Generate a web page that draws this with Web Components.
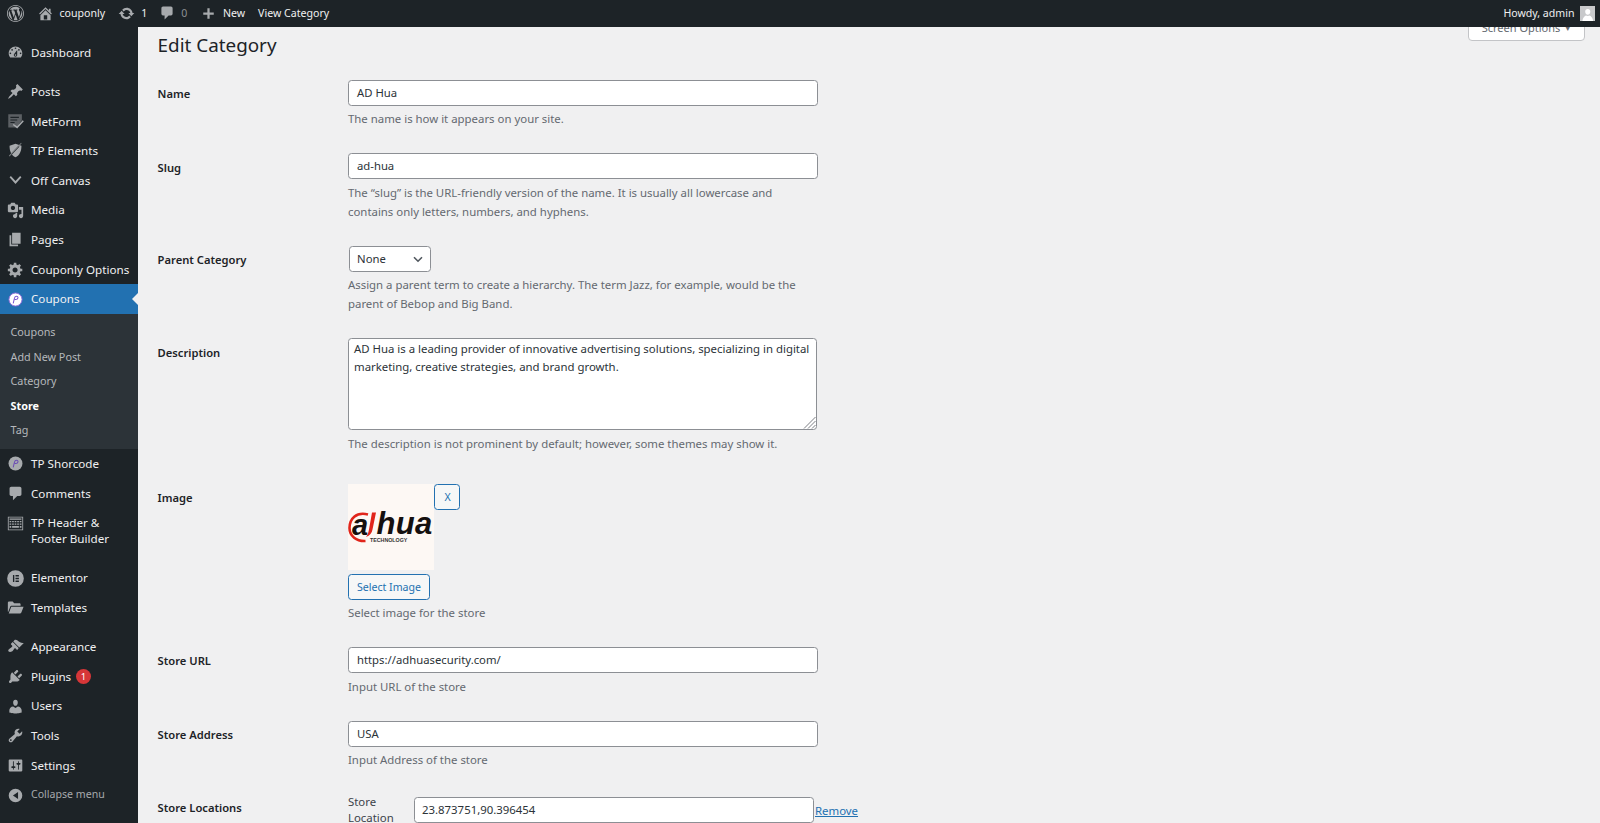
<!DOCTYPE html>
<html>
<head>
<meta charset="utf-8">
<title>Edit Category</title>
<style>
  html, body { margin: 0; height: 100%; overflow: hidden; }
  body { font-family: "Noto Sans", "Open Sans", sans-serif; background: #f0f0f1; }
</style>
</head>
<body>
<wp-admin-page>
  <wp-admin-bar slot="bar"></wp-admin-bar>
  <wp-side-menu slot="side">
    <wp-menu-item icon="dashboard" class="gap">Dashboard</wp-menu-item>
    <wp-menu-item icon="pin">Posts</wp-menu-item>
    <wp-menu-item icon="metform">MetForm</wp-menu-item>
    <wp-menu-item icon="shield">TP Elements</wp-menu-item>
    <wp-menu-item icon="chevron">Off Canvas</wp-menu-item>
    <wp-menu-item icon="media">Media</wp-menu-item>
    <wp-menu-item icon="page">Pages</wp-menu-item>
    <wp-menu-item icon="gear">Couponly Options</wp-menu-item>
    <wp-menu-item icon="coupon" active>Coupons</wp-menu-item>
    <wp-sub-menu>
      <a>Coupons</a>
      <a>Add New Post</a>
      <a>Category</a>
      <a class="on">Store</a>
      <a>Tag</a>
    </wp-sub-menu>
    <wp-menu-item icon="shortcode">TP Shorcode</wp-menu-item>
    <wp-menu-item icon="comment">Comments</wp-menu-item>
    <wp-menu-item icon="keyboard" class="gap" tall>TP Header &amp;<br>Footer Builder</wp-menu-item>
    <wp-menu-item icon="elementor">Elementor</wp-menu-item>
    <wp-menu-item icon="folder" class="gap">Templates</wp-menu-item>
    <wp-menu-item icon="brush">Appearance</wp-menu-item>
    <wp-menu-item icon="plug" badge="1">Plugins</wp-menu-item>
    <wp-menu-item icon="user">Users</wp-menu-item>
    <wp-menu-item icon="wrench">Tools</wp-menu-item>
    <wp-menu-item icon="sliders">Settings</wp-menu-item>
    <wp-menu-item icon="collapse" dim>Collapse menu</wp-menu-item>
  </wp-side-menu>

  <wp-page-head>Edit Category</wp-page-head>

  <wp-form-row label="Name">
    <wp-field>AD Hua</wp-field>
    <wp-help>The name is how it appears on your site.</wp-help>
  </wp-form-row>
  <wp-form-row label="Slug">
    <wp-field>ad-hua</wp-field>
    <wp-help>The “slug” is the URL-friendly version of the name. It is usually all lowercase and contains only letters, numbers, and hyphens.</wp-help>
  </wp-form-row>
  <wp-form-row label="Parent Category">
    <wp-select>None</wp-select>
    <wp-help>Assign a parent term to create a hierarchy. The term Jazz, for example, would be the parent of Bebop and Big Band.</wp-help>
  </wp-form-row>
  <wp-form-row label="Description" style="--row-gap:31px">
    <wp-text-area>AD Hua is a leading provider of innovative advertising solutions, specializing in digital marketing, creative strategies, and brand growth.</wp-text-area>
    <wp-help>The description is not prominent by default; however, some themes may show it.</wp-help>
  </wp-form-row>
  <wp-form-row label="Image">
    <wp-image-picker></wp-image-picker>
    <wp-help>Select image for the store</wp-help>
  </wp-form-row>
  <wp-form-row label="Store URL" style="--label-top:4px">
    <wp-field>https://adhuasecurity.com/</wp-field>
    <wp-help>Input URL of the store</wp-help>
  </wp-form-row>
  <wp-form-row label="Store Address" style="--label-top:4px;--row-gap:25px">
    <wp-field>USA</wp-field>
    <wp-help>Input Address of the store</wp-help>
  </wp-form-row>
  <wp-form-row label="Store Locations" style="--label-top:4px">
    <wp-location-row>23.873751,90.396454</wp-location-row>
  </wp-form-row>
</wp-admin-page>

<script>
const ICONS = {
  logo: '<path d="M20 10c0-5.52-4.48-10-10-10S0 4.48 0 10s4.48 10 10 10 10-4.48 10-10zM10 1.01c4.96 0 8.99 4.03 8.99 8.99s-4.03 8.99-8.99 8.99S1.01 14.96 1.01 10 5.04 1.01 10 1.01zM8.01 14.82L4.96 6.61c.49-.03 1.05-.08 1.05-.08.43-.05.38-1.01-.06-.99 0 0-1.29.1-2.13.1-.15 0-.33 0-.52-.01 1.44-2.17 3.9-3.6 6.7-3.6 2.09 0 3.99.79 5.41 2.09-.6-.08-1.45.35-1.45 1.42 0 .66.38 1.22.79 1.88.31.54.5 1.22.5 2.21 0 1.34-1.27 4.48-1.27 4.48l-2.71-7.5c.48-.03.75-.16.75-.16.43-.05.38-1.1-.05-1.08 0 0-1.3.11-2.14.11-.78 0-2.11-.11-2.11-.11-.43-.02-.48 1.06-.05 1.08l.84.08 1.12 3.04zm6.02 2.15L16.64 10s.67-1.69.39-3.81c.63 1.14.94 2.42.94 3.81 0 2.96-1.56 5.58-3.94 6.97zM2.68 6.77L6.5 17.25c-2.67-1.3-4.47-4.08-4.47-7.25 0-1.16.2-2.23.65-3.23zm7.45 4.53l2.29 6.25c-.75.27-1.57.42-2.42.42-.72 0-1.41-.11-2.06-.3z"/>',
  home: '<path d="M16 8.5l1.53 1.53-1.06 1.06L10 4.62l-6.47 6.47-1.06-1.06L10 2.5l4 4v-2h2v4zm-6-2.46l6 5.99V18H4v-5.97zM12 17v-5H8v5h4z"/>',
  update: '<path d="M10.2 3.28c3.53 0 6.43 2.61 6.92 6h2.08l-3.5 4-3.5-4h2.32c-.45-1.97-2.21-3.45-4.32-3.45-1.45 0-2.73.71-3.54 1.78L4.95 5.66C6.23 4.2 8.11 3.28 10.2 3.28zm-.4 13.44c-3.52 0-6.43-2.61-6.92-6H.8l3.5-4c1.17 1.33 2.33 2.67 3.5 4H5.48c.45 1.97 2.21 3.45 4.32 3.45 1.45 0 2.73-.71 3.54-1.78l1.71 1.95c-1.28 1.46-3.15 2.38-5.25 2.38z"/>',
  plus: '<path d="M17 8.5v3h-5.5V17h-3v-5.5H3v-3h5.5V3h3v5.5z"/>',
  dashboard: '<path d="M3.76 16h12.48c1.1-1.37 1.76-3.11 1.76-5 0-4.42-3.58-8-8-8s-8 3.58-8 8c0 1.89.66 3.63 1.76 5zM10 4c.55 0 1 .45 1 1s-.45 1-1 1-1-.45-1-1 .45-1 1-1zM6 6c.55 0 1 .45 1 1s-.45 1-1 1-1-.45-1-1 .45-1 1-1zm8 0c.55 0 1 .45 1 1s-.45 1-1 1-1-.45-1-1 .45-1 1-1zm-5.37 5.55L12 7v6c0 1.1-.9 2-2 2s-2-.9-2-2c0-.57.24-1.08.63-1.45zM4 10c.55 0 1 .45 1 1s-.45 1-1 1-1-.45-1-1 .45-1 1-1zm12 0c.55 0 1 .45 1 1s-.45 1-1 1-1-.45-1-1 .45-1 1-1zm-5 3c0-.55-.45-1-1-1s-1 .45-1 1 .45 1 1 1 1-.45 1-1z"/>',
  pin: '<path d="M10.44 3.02l1.82-1.82 6.36 6.35-1.83 1.82c-1.05-.68-2.48-.57-3.41.36l-.75.75c-.92.93-1.04 2.35-.35 3.41l-1.83 1.82-2.41-2.41-2.8 2.79c-.42.42-3.38 2.71-3.8 2.29s1.86-3.39 2.28-3.81l2.79-2.79L4.1 9.36l1.83-1.82c1.05.69 2.48.57 3.4-.36l.75-.75c.93-.92 1.05-2.35.36-3.41z"/>',
  metform: '<path fill="#5c6064" fill-rule="evenodd" d="M1.500 1.500h16v7l-6.500 8.500H1.500zM4 4.500v1.300h10V4.500zm0 3v1.300h8V7.500zm0 3v1.300h5V10.500z"/><path d="M18.500 8.500l1.300 1.200-7.800 8.600-5.200-4.200 1-1.300 4 2.900z"/>',
  shield: '<path fill-rule="evenodd" d="M10 2l7 2.300c0 6.700-2 11-7 13.700C5 15.300 3 11 3 4.300zM5 13.500l.9 1.100 8.800-9.300-1.400-.5z"/><path d="M17.300 1.500L3 17l-.8-.8L16.500.8z" fill="#7d8084"/>',
  chevron: '<path d="M3 6.200L4.600 4.800 10 10.500 15.400 4.800 17 6.200 10 14z"/>',
  media: '<path d="M13 11V4c0-.55-.45-1-1-1h-1.670L9 1H5L3.670 3H2c-.55 0-1 .45-1 1v7c0 .55.45 1 1 1h10c.55 0 1-.45 1-1zM7 4.500c1.380 0 2.500 1.120 2.500 2.500S8.380 9.500 7 9.500 4.500 8.380 4.500 7 5.620 4.500 7 4.500zM14 6h5v10.500c0 1.380-1.120 2.500-2.500 2.500S14 17.880 14 16.500s1.120-2.500 2.500-2.500c.17 0 .34.02.5.05V9h-3V6zm-4 8.050V13h2v3.500c0 1.380-1.120 2.500-2.500 2.500S7 17.880 7 16.500 8.120 14 9.500 14c.17 0 .34.02.5.05z"/>',
  page: '<path d="M6 15V2h10v13H6zm-1 1h8v2H3V5h2v11z"/>',
  gear: '<path d="M18 12h-2.180c-.17.7-.44 1.350-.81 1.930l1.540 1.540-2.100 2.100-1.540-1.540c-.58.36-1.230.63-1.910.79V19H8v-2.180c-.68-.16-1.330-.43-1.910-.79l-1.540 1.540-2.120-2.120 1.540-1.540c-.36-.58-.63-1.230-.79-1.910H1V9.030h2.170c.16-.7.44-1.350.8-1.940L2.430 5.550l2.100-2.100 1.540 1.540c.58-.37 1.240-.64 1.930-.81V2h3v2.180c.68.16 1.330.43 1.910.79l1.540-1.540 2.120 2.120-1.540 1.540c.36.59.64 1.240.8 1.940H18V12zm-8.500 1.500c1.660 0 3-1.340 3-3s-1.340-3-3-3-3 1.340-3 3 1.340 3 3 3z"/>',
  coupon: '<circle cx="10" cy="10" r="7.700" fill="#fff" stroke="#8d6bd8" stroke-width="1.100"/><path d="M7.300 14.500l1.500-6C9.100 7.200 10 6.300 11.300 6.300c1.200 0 1.800.7 1.600 1.800-.2 1.300-1.200 2-2.700 2h-1" fill="none" stroke="#7a55cf" stroke-width="1.200"/>',
  shortcode: '<circle cx="10" cy="10" r="8.200" fill="#a7aaad"/><path d="M7.300 14.500l1.500-6C9.100 7.200 10 6.300 11.300 6.300c1.200 0 1.800.7 1.600 1.800-.2 1.300-1.200 2-2.700 2h-1" fill="none" stroke="#6a4bb5" stroke-width="1.200"/>',
  comment: '<path d="M5 2h10c1.100 0 2 .9 2 2v7c0 1.100-.9 2-2 2h-3l-5 5v-5H5c-1.100 0-2-.9-2-2V4c0-1.100.9-2 2-2z"/>',
  keyboard: '<path fill-rule="evenodd" d="M1 2h18v16H1zM2 3v14h16V3zM3 4h14v1.500H3zM3 7h2v1.500H3zm3 0h2v1.500H6zm3 0h2v1.500H9zm3 0h2v1.500h-2zm3 0h2v1.500h-2zM3 10h2v1.500H3zm3 0h2v1.500H6zm3 0h2v1.500H9zm3 0h2v1.500h-2zm3 0h2v1.500h-2zM3 13h2v2H3zm3 0h8v2H6zm9 0h2v2h-2z"/>',
  elementor: '<path fill-rule="evenodd" d="M10 .2a9.800 9.800 0 1 1 0 19.600A9.800 9.800 0 0 1 10 .2zM7 6v8h1.600V6zm3 0v1.600h4V6zm0 3.200v1.600h4V9.200zm0 3.200V14h4v-1.600z"/>',
  folder: '<path d="M1 4.500C1 3.700 1.600 3 2.400 3h4.200L8.500 5h6.100c.8 0 1.400.6 1.400 1.400V8H5.200c-.7 0-1.200.4-1.400 1L1.500 15H1z"/><path d="M5 9h14.500l-2.600 7c-.2.6-.7 1-1.300 1H2z"/>',
  brush: '<path d="M14.480 11.060L7.410 3.990l1.500-1.500c.5-.56 2.300-.47 3.510.32 1.210.8 1.430 1.280 2.910 2.100 1.180.64 2.450 1.260 4.450.85zm-.71.71L6.700 4.700 4.930 6.470c-.39.39-.39 1.020 0 1.410l1.060 1.060c.39.39.39 1.030 0 1.420-.6.6-1.430 1.110-2.210 1.690-.35.26-.7.53-1.010.84C1.430 13.230 1 15.100 2 16c.99 1 2.870.57 4.210-.43.31-.31.58-.66.84-1.010.58-.78 1.090-1.610 1.690-2.210.39-.39 1.020-.39 1.410 0l1.060 1.060c.39.39 1.020.39 1.410 0z"/>',
  plug: '<path d="M13.110 4.360L9.870 7.600 8 5.730l3.240-3.240c.35-.34 1.050-.2 1.560.32.52.51.66 1.210.31 1.550zm-8 1.770l.91-1.120 9.010 9.010-1.190.84c-.71.71-2.630 1.160-3.820 1.160H6.140L4.900 17.260c-.59.59-1.540.59-2.120 0-.59-.58-.59-1.530 0-2.120l1.240-1.240v-3.880c0-1.130.4-3.190 1.090-3.890zm7.260 3.970l3.240-3.240c.34-.35 1.040-.21 1.550.31.52.51.66 1.210.31 1.550l-3.240 3.250z"/>',
  user: '<path d="M10 9.250c-2.270 0-2.730-3.440-2.730-3.440C7 4.020 7.820 2 9.970 2c2.160 0 2.980 2.020 2.710 3.810 0 0-.41 3.440-2.680 3.440zm0 2.570L12.720 10c2.390 0 4.520 2.330 4.520 4.530v2.490s-3.650 1.130-7.240 1.130c-3.650 0-7.240-1.130-7.240-1.130v-2.490c0-2.250 1.940-4.480 4.470-4.480z"/>',
  wrench: '<path d="M16.680 9.770c-1.340 1.340-3.300 1.670-4.950.99l-5.410 6.520c-.99.99-2.590.99-3.580 0s-.99-2.590 0-3.570l6.520-5.420c-.68-1.650-.35-3.610.99-4.950 1.280-1.280 3.120-1.620 4.720-1.060l-2.890 2.890 2.820 2.820 2.860-2.870c.53 1.580.18 3.390-1.080 4.650zM3.810 16.210c.4.39 1.040.39 1.430 0 .4-.4.4-1.040 0-1.430-.39-.4-1.030-.4-1.430 0-.39.39-.39 1.030 0 1.430z"/>',
  sliders: '<path d="M18 16V4c0-.55-.45-1-1-1H3c-.55 0-1 .45-1 1v12c0 .55.45 1 1 1h14c.55 0 1-.45 1-1zM8 11h1c.55 0 1 .45 1 1s-.45 1-1 1H8v1.500c0 .28-.22.5-.5.5s-.5-.22-.5-.5V13H6c-.55 0-1-.45-1-1s.45-1 1-1h1V5.500c0-.28.22-.5.5-.5s.5.22.5.5V11zm5-2h-1c-.55 0-1-.45-1-1s.45-1 1-1h1V5.500c0-.28.22-.5.5-.5s.5.22.5.5V7h1c.55 0 1 .45 1 1s-.45 1-1 1h-1v5.500c0 .28-.22.5-.5.5s-.5-.22-.5-.5V9z"/>',
  collapse: '<path fill-rule="evenodd" d="M10 2a8 8 0 1 1 0 16 8 8 0 0 1 0-16zm3 4l-6 4 6 4z"/>'
};

function svg(name, size) {
  return `<svg width="${size}" height="${size}" viewBox="0 0 20 20" fill="currentColor">${ICONS[name]}</svg>`;
}

class WpAdminPage extends HTMLElement {
  constructor() {
    super();
    this.attachShadow({ mode: 'open' }).innerHTML = `
      <style>
        :host { display: grid; grid-template-columns: 138px 1fr; grid-template-rows: 26.500px 1fr; height: 823px; overflow: hidden; }
        .bar { grid-column: 1 / 3; position: relative; z-index: 2; }
        main { padding: 0 15px 0 19.600px; min-width: 0; }
      </style>
      <div class="bar"><slot name="bar"></slot></div>
      <slot name="side"></slot>
      <main><slot></slot></main>`;
  }
}

class WpAdminBar extends HTMLElement {
  constructor() {
    super();
    this.attachShadow({ mode: 'open' }).innerHTML = `
      <style>
        :host { display: flex; align-items: center; height: 26.500px; background: #1d2327; color: #f0f0f1; font-size: 10.600px; white-space: nowrap; }
        svg { color: #a7aaad; display: block; }
        span.i { display: flex; align-items: center; }
        .dim { color: #8c8f94; }
        .right { margin-left: auto; display: flex; align-items: center; gap: 5px; padding-right: 5px; }
        .avatar { width: 15.500px; height: 15.500px; background: #c8c9cb; color: #fff; display: block; overflow: hidden; }
      </style>
      <span class="i" style="margin-left:6.500px">${svg('logo', 17)}</span>
      <span class="i" style="margin-left:13px">${svg('home', 17)}</span>
      <span style="margin-left:6px">couponly</span>
      <span class="i" style="margin-left:13px">${svg('update', 17)}</span>
      <span style="margin-left:6px">1</span>
      <span class="i" style="margin-left:11.500px">${svg('comment', 16)}</span>
      <span class="dim" style="margin-left:6.500px">0</span>
      <span class="i" style="margin-left:14px">${svg('plus', 15)}</span>
      <span style="margin-left:6.700px">New</span>
      <span style="margin-left:13px">View Category</span>
      <div class="right"><span>Howdy, admin</span>
        <svg class="avatar" viewBox="0 0 16 16"><path fill="currentColor" d="M8 3c1.900 0 2.800 1.500 2.600 3.200C10.400 8 9.400 9 8 9S5.600 8 5.400 6.200C5.200 4.500 6.100 3 8 3zM2.500 16c0-3 1.800-5.500 3.600-6.200.6.300 1.200.5 1.900.5s1.300-.2 1.900-.5c1.800.7 3.600 3.200 3.600 6.200z"/></svg>
      </div>`;
  }
}

class WpSideMenu extends HTMLElement {
  constructor() {
    super();
    this.attachShadow({ mode: 'open' }).innerHTML = `
      <style>
        :host { display: block; background: #1d2327; padding-top: 11.200px; overflow: hidden; }
      </style>
      <slot></slot>`;
  }
}

class WpMenuItem extends HTMLElement {
  connectedCallback() {
    if (this.shadowRoot) return;
    const active = this.hasAttribute('active');
    const tall = this.hasAttribute('tall');
    const dim = this.hasAttribute('dim');
    const gap = this.classList.contains('gap');
    const badge = this.getAttribute('badge');
    this.attachShadow({ mode: 'open' }).innerHTML = `
      <style>
        :host { display: flex; position: relative; box-sizing: border-box; align-items: ${tall ? 'flex-start' : 'center'}; height: ${tall ? 45.500 : 29.650}px; margin-bottom: ${gap ? 9.500 : 0}px; padding-top: ${tall ? 7 : 0}px; font-size: ${dim ? 10.600 : 11.650}px; line-height: 15.500px; color: ${dim ? '#a7aaad' : '#f0f0f1'}; background: ${active ? '#2271b1' : 'transparent'}; }
        .icon { width: 31px; flex: none; display: flex; justify-content: center; padding-right: 1px; box-sizing: border-box; color: ${active ? '#fff' : '#a7aaad'}; }
        svg { display: block; }
        .badge { display: inline-block; width: 15.500px; height: 15.500px; line-height: 15.500px; border-radius: 50%; background: #d63638; color: #fff; font-size: 9.500px; text-align: center; margin-left: 4.500px; }
        .label { display: flex; align-items: center; }
        .arrow { position: absolute; right: 0; top: 50%; margin-top: -6px; border: 6px solid transparent; border-right-color: #f0f0f1; border-left-width: 0; }
      </style>
      <span class="icon">${svg(this.getAttribute('icon'), 17)}</span>
      <span class="label"><span><slot></slot></span>${badge ? `<span class="badge">${badge}</span>` : ''}</span>
      ${active ? '<i class="arrow"></i>' : ''}`;
  }
}

class WpSubMenu extends HTMLElement {
  constructor() {
    super();
    this.attachShadow({ mode: 'open' }).innerHTML = `
      <style>
        :host { display: block; background: #2c3338; padding: 6.500px 0 6.600px 10.500px; }
        ::slotted(a) { display: block; height: 24.400px; line-height: 24.400px; font-size: 10.800px; color: #b5b8bb; }
        ::slotted(a.on) { color: #fff; font-weight: 700; }
      </style>
      <slot></slot>`;
  }
}

class WpPageHead extends HTMLElement {
  constructor() {
    super();
    this.attachShadow({ mode: 'open' }).innerHTML = `
      <style>
        :host { display: flex; justify-content: space-between; align-items: flex-start; height: 53.300px; color: #1d2327; }
        h1 { margin: 6px 0 0; font-size: 18.850px; font-weight: 400; line-height: 24px; }
        .opts { box-sizing: border-box; width: 117px; height: 26px; margin-top: -11.500px; background: #fff; border: 1px solid #c3c4c7; border-radius: 0 0 4px 4px; color: #646970; font-size: 11px; text-align: center; line-height: 24px; }
        .tri { font-size: 7px; margin-left: 4px; vertical-align: 1px; }
      </style>
      <h1><slot></slot></h1>
      <div class="opts">Screen Options<span class="tri">▼</span></div>`;
  }
}

class WpFormRow extends HTMLElement {
  constructor() {
    super();
    this.attachShadow({ mode: 'open' }).innerHTML = `
      <style>
        :host { display: grid; grid-template-columns: 190.400px 1fr; padding-bottom: var(--row-gap, 25px); }
        .label { padding-top: var(--label-top, 4.500px); font-size: 11.200px; font-weight: 600; line-height: 19px; color: #1d2327; }
        .body { display: block; min-width: 0; }
      </style>
      <div class="label"></div>
      <div class="body"><slot></slot></div>`;
    this.shadowRoot.querySelector('.label').textContent = this.getAttribute('label');
  }
}

class WpField extends HTMLElement {
  constructor() {
    super();
    this.attachShadow({ mode: 'open' }).innerHTML = `
      <style>
        :host { display: block; box-sizing: border-box; width: 470px; height: 26px; background: #fff; border: 1px solid #8c8f94; border-radius: 3.500px; padding: 0 8px; font-size: 11.300px; line-height: 24px; color: #2c3338; }
      </style>
      <slot></slot>`;
  }
}

class WpSelect extends HTMLElement {
  constructor() {
    super();
    this.attachShadow({ mode: 'open' }).innerHTML = `
      <style>
        :host { display: flex; justify-content: space-between; align-items: center; box-sizing: border-box; width: 82px; height: 26px; margin-left: .600px; background: #fff; border: 1px solid #8c8f94; border-radius: 3.500px; padding: 0 5px 0 7.500px; font-size: 11.300px; color: #2c3338; }
        svg { display: block; }
      </style>
      <slot></slot>
      <svg width="14" height="14" viewBox="0 0 14 14" fill="none" stroke="#50575e" stroke-width="1.600"><path d="M3 5.200l4 4 4-4"/></svg>`;
  }
}

class WpTextArea extends HTMLElement {
  constructor() {
    super();
    this.attachShadow({ mode: 'open' }).innerHTML = `
      <style>
        :host { display: block; position: relative; box-sizing: border-box; width: 469px; height: 92px; background: #fff; border: 1px solid #8c8f94; border-radius: 3.500px; padding: 1px 3px 1px 5px; font-size: 11.400px; line-height: 17.500px; color: #2c3338; }
        svg { position: absolute; right: 0; bottom: 0; }
      </style>
      <slot></slot>
      <svg width="13" height="13" viewBox="0 0 13 13" stroke="#7c7f84" stroke-width="1"><path d="M1 12.500L12.500 1M5 12.500L12.500 5M9 12.500L12.500 9"/></svg>`;
  }
}

class WpHelp extends HTMLElement {
  constructor() {
    super();
    this.attachShadow({ mode: 'open' }).innerHTML = `
      <style>
        :host { display: block; width: 460px; margin-top: 3.500px; font-size: 11.400px; line-height: 19px; color: #646970; }
      </style>
      <slot></slot>`;
  }
}

class WpImagePicker extends HTMLElement {
  constructor() {
    super();
    this.attachShadow({ mode: 'open' }).innerHTML = `
      <style>
        :host { display: block; }
        .top { display: flex; align-items: flex-start; gap: .500px; }
        .thumb { position: relative; width: 86px; height: 86.500px; background: #fdf8f4; overflow: hidden; color: #15100f; font-family: "Liberation Sans", sans-serif; font-weight: 700; font-style: italic; }
        .thumb span { position: absolute; line-height: .8; }
        .thumb svg { position: absolute; left: 0; top: 0; }
        .btn { box-sizing: border-box; background: #f6f7f7; border: 1px solid #2271b1; border-radius: 3.500px; color: #2271b1; font-size: 10.600px; display: flex; align-items: center; justify-content: center; }
        .x { width: 26px; height: 26px; }
        .sel { width: 82px; height: 25.500px; margin-top: 4px; }
      </style>
      <div class="top">
        <div class="thumb">
          <svg width="86" height="86" viewBox="0 0 86 86" fill="none"><path d="M20 30.500C8 27.500 1.500 35 1.500 44c0 8 7 13.500 16 13" stroke="#e1251b" stroke-width="2.600"/><path d="M24 28.500h4l-3.500 17c-.7 3.500-2.500 6-6.500 7.500 1.500-2 2.300-4 2.900-7z" fill="#e1251b"/></svg>
          <span style="left:4px;top:30px;font-size:29px">a</span>
          <span style="left:28.500px;top:28.400px;font-size:31px;letter-spacing:.3px">hua</span>
          <span style="left:22px;top:54.500px;font-size:5.300px;font-style:normal;color:#333;line-height:1">TECHNOLOGY</span>
        </div>
        <div class="btn x">X</div>
      </div>
      <div class="btn sel">Select Image</div>`;
  }
}

class WpLocationRow extends HTMLElement {
  constructor() {
    super();
    this.attachShadow({ mode: 'open' }).innerHTML = `
      <style>
        :host { display: grid; grid-template-columns: 66px 400px auto; align-items: center; font-size: 11.400px; color: #50575e; }
        .name { line-height: 15.500px; width: 50px; color: #3c434a; }
        .box { box-sizing: border-box; height: 26px; background: #fff; border: 1px solid #8c8f94; border-radius: 3.500px; padding: 0 7px; line-height: 24px; color: #2c3338; }
        a { color: #2271b1; text-decoration: underline; margin-left: 1px; padding-top: 2px; }
      </style>
      <div class="name">Store Location</div>
      <div class="box"><slot></slot></div>
      <a>Remove</a>`;
  }
}

customElements.define('wp-admin-page', WpAdminPage);
customElements.define('wp-admin-bar', WpAdminBar);
customElements.define('wp-side-menu', WpSideMenu);
customElements.define('wp-menu-item', WpMenuItem);
customElements.define('wp-sub-menu', WpSubMenu);
customElements.define('wp-page-head', WpPageHead);
customElements.define('wp-form-row', WpFormRow);
customElements.define('wp-field', WpField);
customElements.define('wp-select', WpSelect);
customElements.define('wp-text-area', WpTextArea);
customElements.define('wp-help', WpHelp);
customElements.define('wp-image-picker', WpImagePicker);
customElements.define('wp-location-row', WpLocationRow);
</script>
</body>
</html>
